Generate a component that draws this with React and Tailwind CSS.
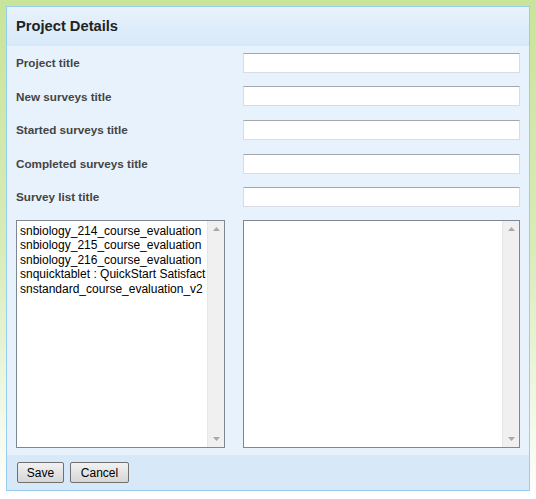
export default function App() {
  const labels = [
    "Project title",
    "New surveys title",
    "Started surveys title",
    "Completed surveys title",
    "Survey list title",
  ];
  const items = [
    "snbiology_214_course_evaluation",
    "snbiology_215_course_evaluation",
    "snbiology_216_course_evaluation",
    "snquicktablet : QuickStart Satisfact",
    "snstandard_course_evaluation_v2",
  ];
  const Scroll = () => (
    <div className="w-[17px] shrink-0 bg-[#f0f0f0] border-l border-[#e6e6e6] flex flex-col justify-between items-center py-[6px]">
      <svg width="7" height="4" viewBox="0 0 7 4"><path d="M3.5 0L7 4H0z" fill="#a8a8a8" /></svg>
      <svg width="7" height="4" viewBox="0 0 7 4"><path d="M0 0H7L3.5 4z" fill="#a8a8a8" /></svg>
    </div>
  );
  return (
    <div className="w-[536px] h-[499px] bg-gradient-to-b from-[#c8e49a] via-[#d8ecb8] to-white pt-[6px] pl-[6px]" style={{ fontFamily: '"Liberation Sans", Arial, sans-serif' }}>
      <div className="w-[524px] h-[485px] border border-[#97cdf0] bg-[#e8f2fc] flex flex-col">
        <div className="h-[39px] bg-gradient-to-b from-[#e8f2fc] to-[#d7e9f9] flex items-center pl-[9px]">
          <span className="text-[14.7px] font-bold text-[#222]">Project Details</span>
        </div>
        <div className="flex-1 flex flex-col pl-[9px] pr-[9px]">
          {labels.map((l, i) => (
            <div key={i} className="h-[33.6px] flex items-center">
              <div className="w-[227px] text-[11.7px] font-bold text-[#444]">{l}</div>
              <div className="w-[277px] h-[20px] bg-white border border-[#d8dce4] border-t-[#a4a6ae]" />
            </div>
          ))}
          <div className="flex mt-[6px] h-[228px]">
            <div className="w-[209px] border border-[#7f8793] bg-white flex overflow-hidden">
              <div className="flex-1 overflow-hidden pl-[3px] pt-[3px] text-[12px] leading-[14.5px] text-black whitespace-nowrap">
                {items.map((t, i) => (
                  <div key={i}>{t}</div>
                ))}
              </div>
              <Scroll />
            </div>
            <div className="w-[18px]" />
            <div className="w-[277px] border border-[#7f8793] bg-white flex overflow-hidden">
              <div className="flex-1" />
              <Scroll />
            </div>
          </div>
        </div>
        <div className="h-[35px] bg-[#d7e9f9] flex items-center pl-[10px] gap-[6px]">
          <button className="h-[21px] w-[47px] text-[12px] text-black border border-[#707070] rounded-[2px] bg-gradient-to-b from-[#f2f2f2] to-[#d6d6d6]">Save</button>
          <button className="h-[21px] w-[59px] text-[12px] text-black border border-[#707070] rounded-[2px] bg-gradient-to-b from-[#f2f2f2] to-[#d6d6d6]">Cancel</button>
        </div>
      </div>
    </div>
  );
}
